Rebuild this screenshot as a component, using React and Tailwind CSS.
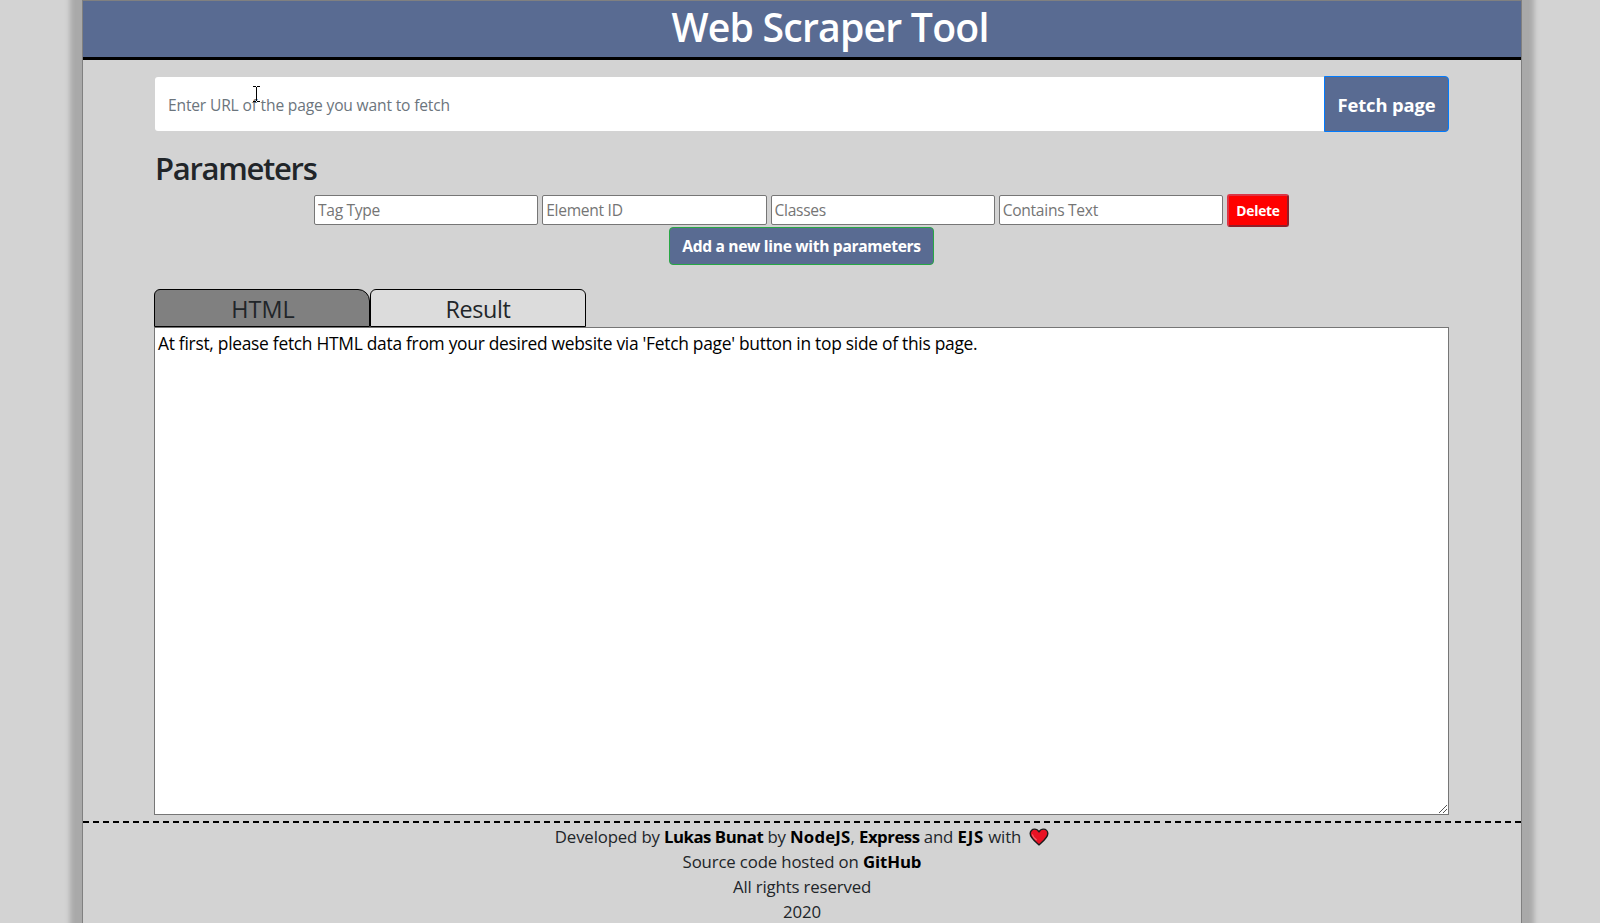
import { useState } from 'react';

const FIELDS = ['Tag Type', 'Element ID', 'Classes', 'Contains Text'];

function Heart() {
  return (
    <svg className="ml-[8px] h-[18px] w-[20px]" viewBox="0 0 21 19" aria-hidden="true">
      <path
        d="M10.5 17.8C7 14.6 1.2 10.6 1.2 5.9 1.2 3.2 3.2 1.2 5.8 1.2c2 0 3.7 1.100 4.700 2.800 1-1.700 2.700-2.800 4.700-2.800 2.600 0 4.600 2 4.600 4.700 0 4.700-5.800 8.700-9.300 11.900Z"
        fill="#e81224"
        stroke="#1c1c1c"
        strokeWidth="1.5"
        strokeLinejoin="round"
      />
      <path d="M3.600 7.200c.6 2.200 2.300 3.900 4 5.300" fill="none" stroke="#f4606c" strokeWidth="1.300" strokeLinecap="round" />
    </svg>
  );
}

function TextCursor() {
  return (
    <svg className="pointer-events-none absolute left-[99px] top-[10px] h-4 w-[7px]" viewBox="0 0 7 16" shapeRendering="crispEdges" aria-hidden="true">
      <path d="M0 0h3v1H0zM4 0h3v1H4zM3 1h1v14H3zM0 15h3v1H0zM4 15h3v1H4z" fill="#000" />
    </svg>
  );
}

function ResizeGrip() {
  return (
    <svg className="pointer-events-none absolute bottom-[2px] right-[2px] h-2 w-2" viewBox="0 0 8 8" aria-hidden="true">
      <path d="M0 8 8 0M4 8l4-4" stroke="#555" strokeWidth="1" fill="none" />
    </svg>
  );
}

function Tab({ label, active, onClick, className }) {
  return (
    <button
      type="button"
      onClick={onClick}
      className={`flex h-[38px] w-[216px] items-center justify-center border border-black pt-[3px] text-[23.4px] text-[#212529] ${
        active ? 'rounded-tl-[6px] rounded-tr-[12px] bg-[#808080]' : 'rounded-t-[6px] bg-[#dcdcdc]'
      } ${className}`}
    >
      {label}
    </button>
  );
}

function Strong({ children, className = 'tracking-[-0.48px]' }) {
  return <b className={`font-bold text-black ${className}`}>{children}</b>;
}

export default function App() {
  const [tab, setTab] = useState('html');
  return (
    <div className="flex h-[923px] justify-center overflow-hidden bg-[#d3d3d3] pl-1 font-['Open_Sans','Noto_Sans',sans-serif] text-[#212529]">
      <div className="flex h-[940px] w-[1440px] flex-col border border-b-0 border-[#808080] bg-[#d3d3d3] shadow-[0_0_5px_12px_#a9a9a9]">
        <header className="flex h-[59px] shrink-0 items-center justify-center border-b-[3px] border-black bg-[#596b92] pb-1 pl-14">
          <h1 className="text-[39.2px] font-semibold leading-none tracking-[-0.8px] text-white">Web Scraper Tool</h1>
        </header>

        <main className="flex flex-col pl-[71px] pr-[72px] pt-4">
          <div className="relative flex h-14 items-center pl-px">
            <input
              className="h-[54px] min-w-0 flex-1 rounded-l-[3px] bg-white px-[13px] pt-px text-[15.6px] tracking-[-0.17px] placeholder:text-[#6c757d]"
              placeholder="Enter URL of the page you want to fetch"
            />
            <TextCursor />
            <button type="button" className="h-14 w-[125px] rounded-r-[4px] border border-[#007bff] bg-[#596b92] pt-[2px] text-[18.4px] font-bold tracking-[-0.15px] text-white">
              Fetch page
            </button>
          </div>

          <h2 className="mt-[17px] h-[38px] pl-px text-[31px] font-semibold leading-[38px] tracking-[-1.3px]">Parameters</h2>

          <div className="mt-[7px] flex h-[33px] items-start justify-center">
            <div className="flex items-start gap-1">
              {FIELDS.map((name) => (
                <input
                  key={name}
                  placeholder={name}
                  className="mt-px h-[30px] w-[224.250px] rounded-[2px] border border-[#767676] bg-white px-[3px] text-[15.6px] tracking-[-0.3px] placeholder:text-[#757575]"
                />
              ))}
              <button type="button" className="h-[33px] w-[62px] rounded-[3px] border-2 border-b-[#8f1f2a] border-l-[#dc3545] border-r-[#8f1f2a] border-t-[#dc3545] bg-[#ff0000] pt-[2px] text-[13.8px] font-bold tracking-[-0.25px] text-white">
                Delete
              </button>
            </div>
          </div>

          <button type="button" className="h-[38px] w-[265px] self-center rounded-[4px] border border-[#28a745] bg-[#596b92] pt-[2px] text-[15.6px] font-bold tracking-[-0.32px] text-white">
            Add a new line with parameters
          </button>

          <div className="mt-6 flex">
            <Tab label="HTML" active={tab === 'html'} onClick={() => setTab('html')} className="pl-[2px]" />
            <Tab label="Result" active={tab === 'result'} onClick={() => setTab('result')} className="tracking-[-0.4px]" />
          </div>
          <div className="relative flex h-[488px]">
            <textarea
              readOnly
              className="h-full w-full resize-none border border-[#767676] bg-white px-[3px] py-[2px] text-[17.4px] leading-[26px] tracking-[-0.28px] text-black outline-none"
              value="At first, please fetch HTML data from your desired website via 'Fetch page' button in top side of this page."
            />
            <ResizeGrip />
          </div>
        </main>

        <footer className="mt-[6px] flex flex-col items-center text-[16.8px] leading-[25px] tracking-[-0.15px]">
          <div className="h-[2px] w-full bg-[repeating-linear-gradient(90deg,#000_0_6px,transparent_6px_10.014px)]" />
          <p className="mt-px flex items-center whitespace-pre">
            <span>
              Developed by <Strong>Lukas Bunat</Strong> by <Strong className="tracking-[0.2px]">NodeJS</Strong>, <Strong>Express</Strong> and{' '}
              <Strong className="tracking-[0.8px]">EJS</Strong> with
            </span>
            <Heart />
          </p>
          <p>
            Source code hosted on <Strong className="tracking-[-0.1px]">GitHub</Strong>
          </p>
          <p>All rights reserved</p>
          <p>2020</p>
        </footer>
      </div>
    </div>
  );
}
